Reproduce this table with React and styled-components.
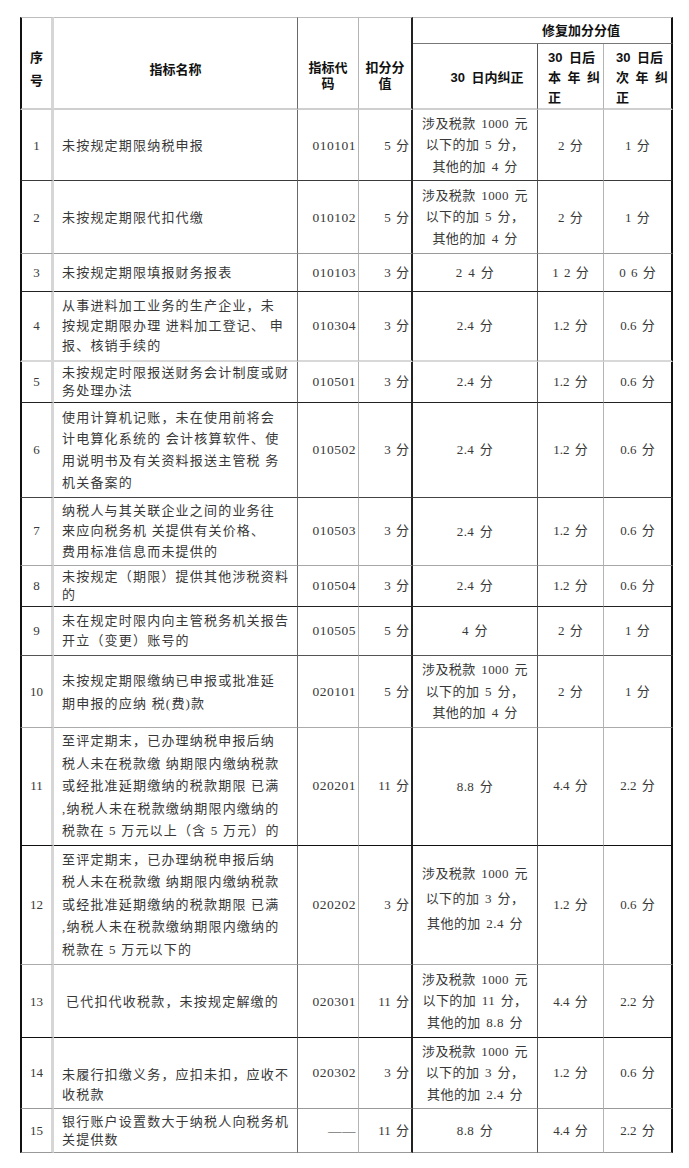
import React from 'react';
import styled, { createGlobalStyle } from 'styled-components';

const GlobalStyle = createGlobalStyle`
  html, body {
    margin: 0;
    padding: 0;
    background: #fff;
  }
  * {
    box-sizing: border-box;
  }
`;

const Page = styled.div`
  width: 689px;
  min-height: 1168px;
  padding: 17px 0 0 20px;
  background: #fff;
`;

const Table = styled.table`
  width: 653px;
  table-layout: fixed;
  border-collapse: separate;
  border-spacing: 0;
  font-family: "Liberation Serif", "Noto Sans CJK SC", serif;
  font-size: 13px;
  color: #383838;
`;

const Col = styled.col`
  width: ${p => p.$w}px;
`;

const HeadRow = styled.tr`
  height: ${p => p.$h}px;
`;

const HeadCell = styled.th`
  font-family: "Liberation Sans", "Noto Sans CJK SC", sans-serif;
  font-weight: 700;
  font-size: 13px;
  color: #111;
  white-space: nowrap;
  line-height: ${p => p.$lh || 16}px;
  text-align: ${p => p.$align || 'center'};
  vertical-align: middle;
  padding: ${p => p.$pt || 0}px 0 0 ${p => p.$pl || 0}px;
  border-top: ${p => p.$top || 'none'};
  border-left: ${p => p.$left || 'none'};
  border-right: ${p => p.$right || 'none'};
  border-bottom: ${p => p.$bottom || 'none'};
`;

const BodyRow = styled.tr`
  height: ${p => p.$h}px;

  & > td {
    padding: 0;
    vertical-align: middle;
    line-height: ${p => p.$lh || 21}px;
    border-bottom: ${p => p.$bw || 1}px solid ${p => p.$line};
    white-space: nowrap;
    word-spacing: 2px;
  }
  & > td:nth-child(1) {
    text-align: center;
    border-left: 2px solid #111;
    border-right: 3px solid #d6d6d6;
  }
  & > td:nth-child(2) {
    padding-left: ${p => p.$indent || 8}px;
    padding-top: ${p => p.$nameTop || 0}px;
    letter-spacing: 1.2px;
    word-spacing: 0;
    line-height: ${p => p.$nlh || p.$lh || 21}px;
    border-right: 1px solid #6a6a6a;
  }
  & > td:nth-child(3) {
    text-align: right;
    padding-right: 2px;
    font-size: 13.5px;
    letter-spacing: 0.5px;
    border-right: 1px solid #b4b4b4;
  }
  & > td:nth-child(4) {
    text-align: right;
    padding-right: 2px;
    border-right: 2px solid #222;
  }
  & > td:nth-child(5) {
    text-align: center;
    letter-spacing: 0.4px;
    line-height: ${p => p.$clh || 21.5}px;
    padding-bottom: ${p => p.$fixPad || 0}px;
    border-right: 1px solid #555;
  }
  & > td:nth-child(6) {
    text-align: center;
    border-right: 1px solid #b4b4b4;
  }
  & > td:nth-child(7) {
    text-align: center;
    border-right: 2px solid #111;
  }
`;

const rows = [
  { no: '1', name: ['未按规定期限纳税申报'], code: '010101', deduct: '5 分', fix: ['涉及税款 1000 元', '以下的加 5 分，', '其他的加 4 分'], cur: '2 分', next: '1 分', h: 71, line: '#3a3a3a' },
  { no: '2', name: ['未按规定期限代扣代缴'], code: '010102', deduct: '5 分', fix: ['涉及税款 1000 元', '以下的加 5 分，', '其他的加 4 分'], cur: '2 分', next: '1 分', h: 73, line: '#9a9a9a' },
  { no: '3', name: ['未按规定期限填报财务报表'], code: '010103', deduct: '3 分', fix: ['2 4 分'], cur: '1 2 分', next: '0 6 分', h: 38, line: '#222' },
  { no: '4', name: ['从事进料加工业务的生产企业，未', '按规定期限办理 进料加工登记、 申', '报、核销手续的'], code: '010304', deduct: '3 分', fix: ['2.4 分'], cur: '1.2 分', next: '0.6 分', h: 70, line: '#d8d8d8', bw: 2, lh: 20 },
  { no: '5', name: ['未按规定时限报送财务会计制度或财', '务处理办法'], code: '010501', deduct: '3 分', fix: ['2.4 分'], cur: '1.2 分', next: '0.6 分', h: 41, line: '#222', lh: 18 },
  { no: '6', name: ['使用计算机记账，未在使用前将会', '计电算化系统的 会计核算软件、使', '用说明书及有关资料报送主管税 务', '机关备案的'], code: '010502', deduct: '3 分', fix: ['2.4 分'], cur: '1.2 分', next: '0.6 分', h: 95, line: '#444', lh: 21.7 },
  { no: '7', name: ['纳税人与其关联企业之间的业务往', '来应向税务机 关提供有关价格、', '费用标准信息而未提供的'], code: '010503', deduct: '3 分', fix: ['2.4 分'], cur: '1.2 分', next: '0.6 分', h: 68, line: '#a8a8a8', lh: 20.5 },
  { no: '8', name: ['未按规定（期限）提供其他涉税资料', '的'], code: '010504', deduct: '3 分', fix: ['2.4 分'], cur: '1.2 分', next: '0.6 分', h: 41, line: '#222', lh: 18 },
  { no: '9', name: ['未在规定时限内向主管税务机关报告', '开立（变更）账号的'], code: '010505', deduct: '5 分', fix: ['4 分'], cur: '2 分', next: '1 分', h: 49, line: '#555', lh: 20 },
  { no: '10', name: ['未按规定期限缴纳已申报或批准延', '期申报的应纳 税(费)款'], code: '020101', deduct: '5 分', fix: ['涉及税款 1000 元', '以下的加 5 分，', '其他的加 4 分'], cur: '2 分', next: '1 分', h: 72, line: '#ababab', nlh: 23 },
  { no: '11', name: ['至评定期末，已办理纳税申报后纳', '税人未在税款缴 纳期限内缴纳税款', '或经批准延期缴纳的税款期限 已满', ',纳税人未在税款缴纳期限内缴纳的', '税款在 5 万元以上（含 5 万元）的'], code: '020201', deduct: '11 分', fix: ['8.8 分'], cur: '4.4 分', next: '2.2 分', h: 118, line: '#111', lh: 22.5 },
  { no: '12', name: ['至评定期末，已办理纳税申报后纳', '税人未在税款缴 纳期限内缴纳税款', '或经批准延期缴纳的税款期限 已满', ',纳税人未在税款缴纳期限内缴纳的', '税款在 5 万元以下的'], code: '020202', deduct: '3 分', fix: ['涉及税款 1000 元', '以下的加 3 分，', '其他的加 2.4 分'], cur: '1.2 分', next: '0.6 分', h: 119, line: '#ababab', lh: 22.5, clh: 25, fixPad: 13 },
  { no: '13', name: ['已代扣代收税款，未按规定解缴的'], code: '020301', deduct: '11 分', fix: ['涉及税款 1000 元', '以下的加 11 分，', '其他的加 8.8 分'], cur: '4.4 分', next: '2.2 分', h: 73, line: '#111', indent: 12 },
  { no: '14', name: ['未履行扣缴义务，应扣未扣，应收不', '收税款'], code: '020302', deduct: '3 分', fix: ['涉及税款 1000 元', '以下的加 3 分，', '其他的加 2.4 分'], cur: '1.2 分', next: '0.6 分', h: 71, line: '#999', lh: 20, nameTop: 24 },
  { no: '15', name: ['银行账户设置数大于纳税人向税务机', '关提供数'], code: '——', deduct: '11 分', fix: ['8.8 分'], cur: '4.4 分', next: '2.2 分', h: 44, line: '#999', lh: 18 },
];

const Lines = ({ lines }) =>
  lines.map((text, i) => (
    <React.Fragment key={i}>
      {i > 0 && <br />}
      {text}
    </React.Fragment>
  ));

const widths = [34, 244, 61, 54, 125, 66, 69];
const gap = '\u2002';

const App = () => {
  return (
    <>
      <GlobalStyle />
      <Page>
        <Table>
          <colgroup>
            {widths.map((w, i) => (
              <Col key={i} $w={w} />
            ))}
          </colgroup>
          <thead>
            <HeadRow $h={27}>
              <HeadCell rowSpan={2} $lh={23} $pt={12} $top="1px solid #bdbdbd" $left="2px solid #111" $right="3px solid #d6d6d6" $bottom="2px solid #cfcfcf">
                序<br />号
              </HeadCell>
              <HeadCell rowSpan={2} $pt={14} $top="1px solid #bdbdbd" $right="1px solid #6a6a6a" $bottom="2px solid #cfcfcf">
                指标名称
              </HeadCell>
              <HeadCell rowSpan={2} $pt={25} $top="1px solid #bdbdbd" $right="1px solid #b4b4b4" $bottom="2px solid #cfcfcf">
                指标代<br />码
              </HeadCell>
              <HeadCell rowSpan={2} $pt={25} $top="1px solid #bdbdbd" $right="2px solid #222" $bottom="2px solid #cfcfcf">
                扣分分<br />值
              </HeadCell>
              <HeadCell colSpan={3} $pl={78} $top="1px solid #bdbdbd" $right="2px solid #111" $bottom="1px solid #777">
                修复加分分值
              </HeadCell>
            </HeadRow>
            <HeadRow $h={64}>
              <HeadCell $pl={24} $pt={4} $right="1px solid #555" $bottom="2px solid #cfcfcf">
                30{gap}日内纠正
              </HeadCell>
              <HeadCell $align="left" $pl={10} $lh={20} $pt={4} $right="1px solid #b4b4b4" $bottom="2px solid #cfcfcf">
                30{gap}日后<br />本{gap}年{gap}纠<br />正
              </HeadCell>
              <HeadCell $align="left" $pl={12} $lh={20} $pt={4} $right="2px solid #111" $bottom="2px solid #cfcfcf">
                30{gap}日后<br />次{gap}年{gap}纠<br />正
              </HeadCell>
            </HeadRow>
          </thead>
          <tbody>
            {rows.map(r => (
              <BodyRow
                key={r.no}
                $h={r.h}
                $line={r.line}
                $bw={r.bw}
                $lh={r.lh}
                $nlh={r.nlh}
                $clh={r.clh}
                $fixPad={r.fixPad}
                $indent={r.indent}
                $nameTop={r.nameTop}
              >
                <td>{r.no}</td>
                <td><Lines lines={r.name} /></td>
                <td>{r.code}</td>
                <td>{r.deduct}</td>
                <td><Lines lines={r.fix} /></td>
                <td>{r.cur}</td>
                <td>{r.next}</td>
              </BodyRow>
            ))}
          </tbody>
        </Table>
      </Page>
    </>
  );
};

export default App;
